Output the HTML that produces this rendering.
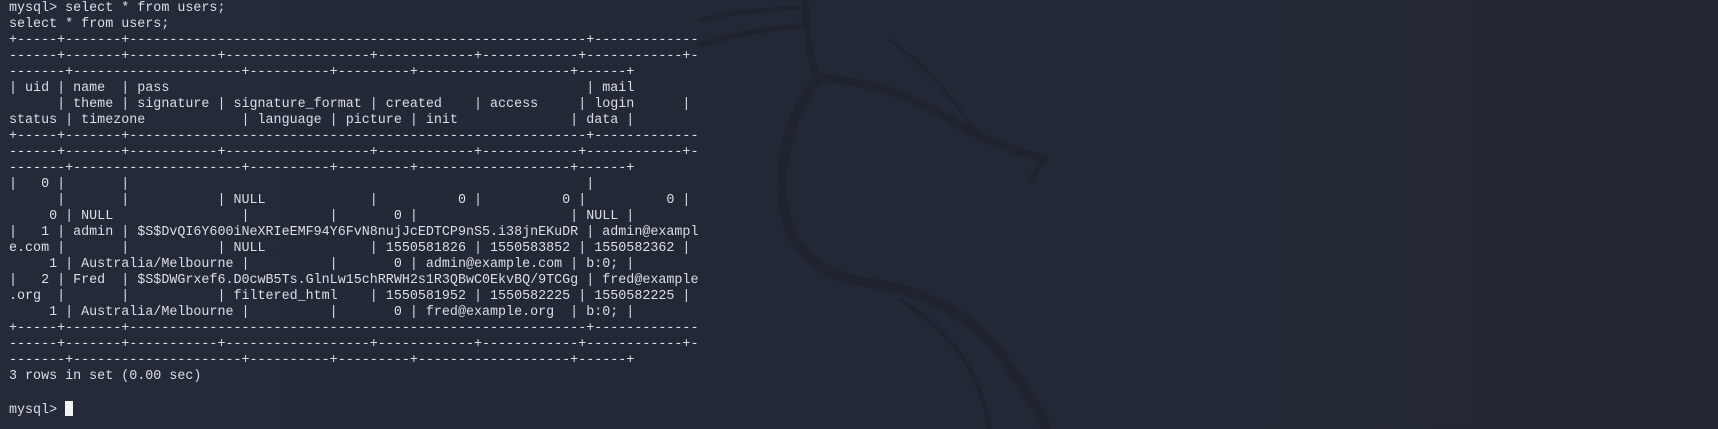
<!DOCTYPE html>
<html><head><meta charset="utf-8"><style>
html,body{margin:0;padding:0;}
body{width:1718px;height:429px;overflow:hidden;background:linear-gradient(90deg,#242a38 0%,#222836 50%,#232733 100%);position:relative;}
svg.bg{position:absolute;left:0;top:0;}
pre{position:absolute;left:9px;top:1px;margin:0;font-family:"Liberation Mono",monospace;font-size:13.37px;line-height:16px;color:#dcdee3;white-space:pre;}
.cur{display:inline-block;width:8px;height:15px;background:#f2f2f2;vertical-align:-3px;}
</style></head><body>
<svg class="bg" width="1718" height="429" viewBox="0 0 1718 429">
<g fill="none" stroke="#1f232d" stroke-linecap="round">
<path d="M805,0 C807,35 810,60 818,78" stroke-width="7"/>
<path d="M700,45 C740,32 775,28 805,26" stroke-width="6"/>
<path d="M700,20 C735,12 770,8 803,8" stroke-width="4"/>
<path d="M818,80 C790,110 775,170 785,215 C798,260 830,278 870,283 C930,292 975,318 1005,360 C1025,390 1040,410 1046,429" stroke-width="10"/>
<path d="M900,300 C950,330 980,370 990,429" stroke-width="4"/>
<path d="M818,78 C870,80 920,100 960,125 C985,140 1010,150 1040,158" stroke-width="8"/>
<path d="M890,40 C925,65 950,95 975,130" stroke-width="3"/>
<path d="M1000,145 L1045,158 L1030,180" stroke-width="5"/>
</g>
</svg>
<pre>mysql&gt; select * from users;
select * from users;
+-----+-------+---------------------------------------------------------+-------------
------+-------+-----------+------------------+------------+------------+------------+-
-------+---------------------+----------+---------+-------------------+------+
| uid | name  | pass                                                    | mail
      | theme | signature | signature_format | created    | access     | login      |
status | timezone            | language | picture | init              | data |
+-----+-------+---------------------------------------------------------+-------------
------+-------+-----------+------------------+------------+------------+------------+-
-------+---------------------+----------+---------+-------------------+------+
|   0 |       |                                                         |
      |       |           | NULL             |          0 |          0 |          0 |
     0 | NULL                |          |       0 |                   | NULL |
|   1 | admin | $S$DvQI6Y600iNeXRIeEMF94Y6FvN8nujJcEDTCP9nS5.i38jnEKuDR | admin@exampl
e.com |       |           | NULL             | 1550581826 | 1550583852 | 1550582362 |
     1 | Australia/Melbourne |          |       0 | admin@example.com | b:0; |
|   2 | Fred  | $S$DWGrxef6.D0cwB5Ts.GlnLw15chRRWH2s1R3QBwC0EkvBQ/9TCGg | fred@example
.org  |       |           | filtered_html    | 1550581952 | 1550582225 | 1550582225 |
     1 | Australia/Melbourne |          |       0 | fred@example.org  | b:0; |
+-----+-------+---------------------------------------------------------+-------------
------+-------+-----------+------------------+------------+------------+------------+-
-------+---------------------+----------+---------+-------------------+------+
3 rows in set (0.00 sec)

mysql&gt; <span class="cur"></span></pre>
</body></html>
